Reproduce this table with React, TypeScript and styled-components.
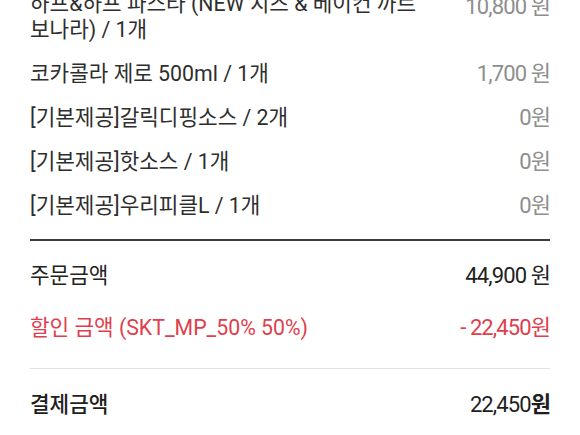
import React from "react";
import styled, { createGlobalStyle } from "styled-components";

const GlobalStyle = createGlobalStyle`
  html, body {
    margin: 0;
    padding: 0;
    background: #ffffff;
    overflow: hidden;
  }
  body {
    font-family: "Roboto", "Noto Sans CJK KR", sans-serif;
    -webkit-font-smoothing: antialiased;
  }
`;

const Page = styled.div`
  width: 580px;
  height: 435px;
  box-sizing: border-box;
  padding: 0 30px;
  overflow: hidden;
  background: #fff;
`;

const ItemList = styled.ul`
  list-style: none;
  margin: -18px 0 0;
  padding: 0 0 11px;
  border-bottom: 2px solid #3a3a3a;
`;

const ItemRow = styled.li`
  display: flex;
  justify-content: space-between;
  align-items: flex-start;
  gap: 40px;
  padding: 9px 0;
  line-height: 26px;
`;

const ItemName = styled.span`
  flex: 1;
  min-width: 0;
  font-size: 21.3px;
  color: #2e2e2e;
`;

const ItemPrice = styled.span<{ $drop?: boolean }>`
  flex: none;
  font-size: 22px;
  letter-spacing: -0.9px;
  color: #8e8e8e;
  white-space: nowrap;
  padding-top: ${(p) => (p.$drop ? "3px" : "0")};
`;

const Summary = styled.div`
  display: flex;
  flex-direction: column;
  gap: 26px;
  padding: 22px 0 27px;
  border-bottom: 1px solid #e2e2e2;
`;

const SummaryRow = styled.div<{ $tone?: "red" }>`
  display: flex;
  justify-content: space-between;
  align-items: center;
  line-height: 26px;
  color: ${(p) => (p.$tone === "red" ? "#e03e4c" : "#222222")};
`;

const Label = styled.span<{ $strong?: boolean }>`
  font-size: 21.3px;
  font-weight: ${(p) => (p.$strong ? 500 : 400)};
`;

const Amount = styled.span`
  font-size: 22px;
  letter-spacing: -0.9px;
  white-space: nowrap;
`;

const TotalRow = styled.div`
  display: flex;
  justify-content: space-between;
  align-items: center;
  padding-top: 23px;
  line-height: 26px;
  color: #1e1e1e;
`;

const Won = styled.span`
  font-weight: 700;
`;

const items = [
  { name: "하프&하프 파스타 (NEW 치즈 & 베이컨 까르보나라) / 1개", price: "10,800 원", drop: true },
  { name: "코카콜라 제로 500ml / 1개", price: "1,700 원" },
  { name: "[기본제공]갈릭디핑소스 / 2개", price: "0원" },
  { name: "[기본제공]핫소스 / 1개", price: "0원" },
  { name: "[기본제공]우리피클L / 1개", price: "0원" },
];

export default function App() {
  return (
    <>
      <GlobalStyle />
      <Page>
        <ItemList>
          {items.map((it) => (
            <ItemRow key={it.name}>
              <ItemName>{it.name}</ItemName>
              <ItemPrice $drop={it.drop}>{it.price}</ItemPrice>
            </ItemRow>
          ))}
        </ItemList>
        <Summary>
          <SummaryRow>
            <Label>주문금액</Label>
            <Amount>44,900 원</Amount>
          </SummaryRow>
          <SummaryRow $tone="red">
            <Label>할인 금액 (SKT_MP_50% 50%)</Label>
            <Amount>- 22,450원</Amount>
          </SummaryRow>
        </Summary>
        <TotalRow>
          <Label $strong>결제금액</Label>
          <Amount>
            22,450<Won>원</Won>
          </Amount>
        </TotalRow>
      </Page>
    </>
  );
}
